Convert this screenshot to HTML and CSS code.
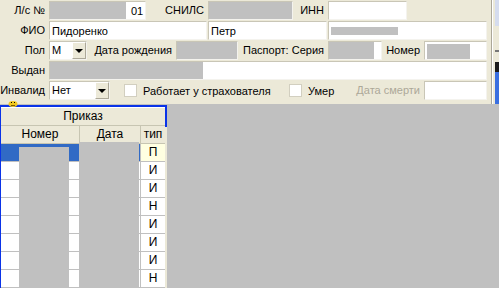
FILE: index.html
```html
<!DOCTYPE html>
<html>
<head lang="ru">
    <meta charset="UTF-8">
    <title></title>
    <link rel="stylesheet" href="styles.css">
</head>
<body>
<div id="top">
    <div id="form">
        <div class="row">
            <span class="lbl" style="width:49px">Л/с №</span>
            <span class="fld" style="width:97px"><i class="mask" style="width:76px"></i><span class="txt">01</span></span>
            <span class="lbl" style="width:62px">СНИЛС</span>
            <span class="fld" style="width:85px"><i class="mask fill"></i></span>
            <span class="lbl" style="width:35px">ИНН</span>
            <span class="fld" style="width:79px"></span>
        </div>
        <div class="row">
            <span class="lbl" style="width:49px">ФИО</span>
            <span class="fld" style="width:158px"><span class="txt">Пидоренко</span></span>
            <span class="fld gap1" style="width:119px"><span class="txt">Петр</span></span>
            <span class="fld gap1" style="width:159px"><i class="mask bar" style="width:67px"></i></span>
        </div>
        <div class="row">
            <span class="lbl" style="width:49px">Пол</span>
            <span class="sel" style="width:38px"><span class="txt">М</span><span class="btn"><b class="arr"></b></span></span>
            <span class="lbl" style="width:89px">Дата рождения</span>
            <span class="fld" style="width:62px"><i class="mask fill"></i></span>
            <span class="lbl" style="width:90px">Паспорт: Серия</span>
            <span class="fld" style="width:54px"><i class="mask" style="width:45px"></i></span>
            <span class="lbl" style="width:42px">Номер</span>
            <span class="fld pad" style="width:63px"><i class="mask low" style="width:43px"></i></span>
        </div>
        <div class="row">
            <span class="lbl" style="width:49px">Выдан</span>
            <span class="fld" style="width:438px"><i class="mask" style="width:153px"></i></span>
        </div>
        <div class="row">
            <span class="lbl" style="width:49px">Инвалид</span>
            <span class="sel" style="width:61px"><span class="txt">Нет</span><span class="btn"><b class="arr"></b></span></span>
            <span class="check first" style="width:165px"><i class="box"></i>Работает у страхователя</span>
            <span class="check" style="width:50px"><i class="box"></i>Умер</span>
            <span class="lbl off" style="width:85px">Дата смерти</span>
            <span class="fld" style="width:63px"></span>
        </div>
    </div>
    <div id="edge">
        <div id="strip">
            <i class="s1"></i><i class="s2"></i><i class="s3"></i><i class="s4"></i><i class="s5"></i><i class="s6"></i>
        </div>
    </div>
</div>
<div id="bottom">
    <div id="win">
        <svg id="ico" width="10" height="7" viewBox="0 0 10 7">
            <ellipse cx="5" cy="4" rx="4.5" ry="3" fill="#f2c81e"/>
            <rect x="3" y="2" width="1" height="1" fill="#000"/>
            <rect x="6" y="2" width="1" height="1" fill="#000"/>
            <rect x="3" y="5" width="4" height="1" fill="#7a5a00"/>
        </svg>
        <div id="grid">
            <div class="hd1">Приказ</div>
            <div class="hd2">
                <span class="c1">Номер</span>
                <span class="c2">Дата</span>
                <span class="c3">тип</span>
            </div>
            <div class="tr sel-row"><span class="c1"></span><span class="c2"></span><span class="c3">П</span></div>
            <div class="tr"><span class="c1"></span><span class="c2"></span><span class="c3">И</span></div>
            <div class="tr"><span class="c1"></span><span class="c2"></span><span class="c3">И</span></div>
            <div class="tr"><span class="c1"></span><span class="c2"></span><span class="c3">Н</span></div>
            <div class="tr"><span class="c1"></span><span class="c2"></span><span class="c3">И</span></div>
            <div class="tr"><span class="c1"></span><span class="c2"></span><span class="c3">И</span></div>
            <div class="tr"><span class="c1"></span><span class="c2"></span><span class="c3">И</span></div>
            <div class="tr"><span class="c1"></span><span class="c2"></span><span class="c3">Н</span></div>
            <i class="redact r1"></i>
            <i class="redact r2"></i>
        </div>
        <div id="side"><i class="focus"></i></div>
    </div>
</div>
</body>
</html>
```

FILE: styles.css
```css
*{
    margin: 0;
    padding: 0;
    box-sizing: border-box;
}
body{
    width: 499px;
    height: 288px;
    overflow: hidden;
    background: #c0c0c0;
    font: 11px "Liberation Sans", Arial, sans-serif;
    color: #000;
}
i, b{
    display: block;
}
#top{
    display: flex;
    height: 104px;
    background: #ece9d8;
}
#form{
    width: 492px;
    padding-top: 1px;
    border-right: 1px solid #aca899;
}
.row{
    display: flex;
    height: 20px;
}
.lbl{
    height: 19px;
    line-height: 19px;
    text-align: right;
    padding-right: 4px;
    white-space: nowrap;
}
.lbl.off{
    color: #aca899;
}
.fld{
    display: flex;
    align-items: center;
    height: 19px;
    background: #fff;
    border: 1px solid;
    border-color: #c9c6b6 #f4f3ee #f4f3ee #c9c6b6;
    overflow: hidden;
}
.fld.gap1{
    margin-left: 1px;
}
.fld.pad{
    padding-left: 2px;
}
.txt{
    padding-left: 2px;
    white-space: nowrap;
}
.mask{
    height: 100%;
    background: #c0c0c0;
    flex: none;
}
.mask + .txt{
    padding-left: 5px;
}
.mask.fill{
    width: 100%;
}
.mask.bar{
    height: 8px;
    margin-left: 2px;
}
.mask.low{
    height: 15px;
    margin-top: 2px;
}
.sel{
    display: flex;
    height: 19px;
    background: #fff;
    border: 1px solid;
    border-color: #c9c6b6 #f4f3ee #f4f3ee #c9c6b6;
}
.sel .txt{
    flex: 1;
    line-height: 17px;
}
.sel .btn{
    width: 14px;
    display: flex;
    align-items: center;
    justify-content: center;
    background: #ece9d8;
    border: 1px solid;
    border-color: #fff #aca899 #aca899 #fff;
}
.arr{
    width: 0;
    height: 0;
    border-left: 4px solid transparent;
    border-right: 4px solid transparent;
    border-top: 4px solid #000;
}
.check{
    display: flex;
    align-items: center;
    height: 19px;
    white-space: nowrap;
}
.check.first{
    margin-left: 14px;
}
.box{
    width: 13px;
    height: 13px;
    margin-right: 6px;
    background: #fff;
    border: 1px solid #d2cfc0;
}
#edge{
    flex: 1;
    display: flex;
    justify-content: flex-end;
    border-left: 1px solid #fff;
}
#strip{
    width: 4px;
    display: flex;
    flex-direction: column;
}
.s1{ height: 26px; background: #d5dcee; }
.s2{ height: 24px; background: #ece9d8; }
.s3{ height: 2px; background: #777; }
.s4{ height: 10px; background: #ece9d8; }
.s5{ height: 10px; background: #1b1b1b; }
.s6{ flex: 1; background: #3a6fe0; }
#bottom{
    padding-top: 1px;
}
#win{
    position: relative;
    display: flex;
    width: 167px;
    height: 183px;
    border-top: 2px solid #0a33e8;
    border-left: 1px solid #0a33e8;
}
#ico{
    position: absolute;
    left: 7px;
    top: -7px;
    z-index: 2;
}
#grid{
    position: relative;
    width: 164px;
    background: #fff;
}
#side{
    width: 2px;
    background: #ece9d8;
}
.focus{
    height: 20px;
    background: #0a33e8;
}
.hd1{
    height: 19px;
    line-height: 17px;
    text-align: center;
    font-size: 12px;
    background: #ece9d8;
    border-top: 1px solid #fff;
    border-bottom: 1px solid #c7c5b2;
}
.hd2, .tr{
    display: flex;
    height: 18px;
}
.hd2{
    background: #ece9d8;
    border-bottom: 1px solid #c7c5b2;
    font-size: 12px;
}
.hd2 span{
    text-align: center;
    line-height: 17px;
    border-right: 1px solid #c7c5b2;
}
.tr{
    border-bottom: 1px solid #c0c0c0;
}
.tr span{
    text-align: center;
    line-height: 17px;
    font-size: 12px;
    border-right: 1px solid #c0c0c0;
}
.c1{
    width: 79px;
}
.c2{
    width: 61px;
}
.c3{
    flex: 1;
}
.hd2 .c3, .tr .c3{
    border-right: none;
}
.sel-row .c1, .sel-row .c2{
    background: #316ac5;
}
.sel-row .c3{
    background: #ffffe1;
}
.redact{
    position: absolute;
    bottom: 0;
    background: #c0c0c0;
}
.r1{
    left: 18px;
    width: 50px;
    top: 40px;
}
.r2{
    left: 78px;
    width: 60px;
    top: 35px;
}
```
